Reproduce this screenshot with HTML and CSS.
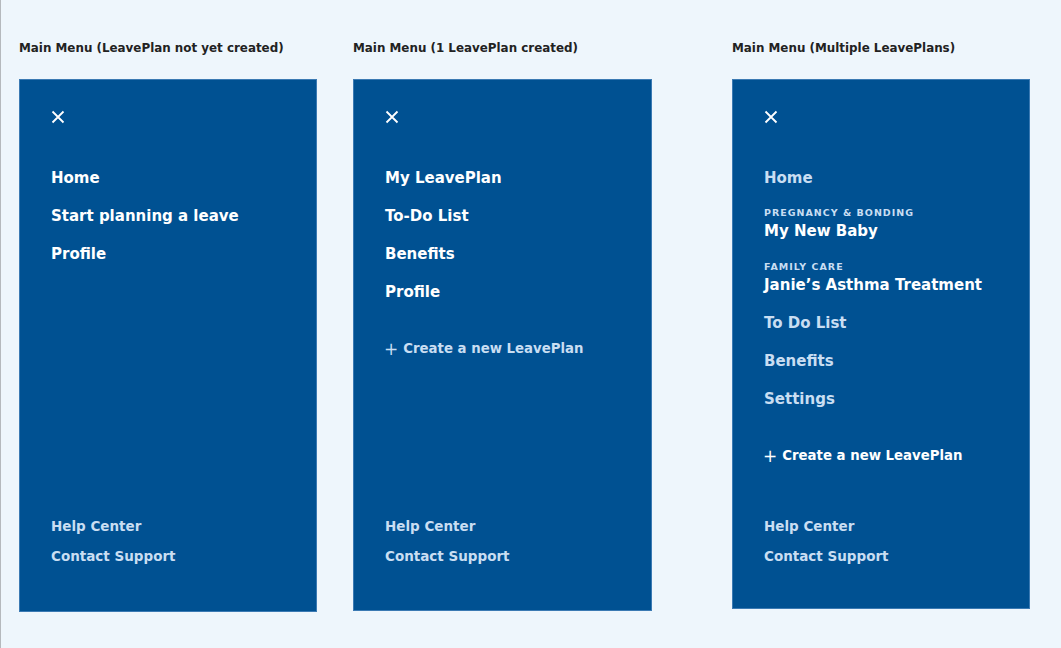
FILE: index.html
```html
<!DOCTYPE html>
<html lang="en">
<head>
<meta charset="utf-8">
<title>Main Menu</title>
<link rel="stylesheet" href="styles.css">
</head>
<body>
<div class="board">
  <section class="col col-1">
    <h2 class="col-title">Main Menu (LeavePlan not yet created)</h2>
    <nav class="panel panel-1">
      <svg class="close" viewBox="0 0 14 14" width="14" height="14"><path d="M1.5 1.5 L12.5 12.5 M12.5 1.5 L1.5 12.5" stroke="#fff" stroke-width="1.8" fill="none"/></svg>
      <ul class="items">
        <li class="item">Home</li>
        <li class="item">Start planning a leave</li>
        <li class="item">Profile</li>
      </ul>
      <ul class="footer">
        <li class="link">Help Center</li>
        <li class="link">Contact Support</li>
      </ul>
    </nav>
  </section>
  <section class="col col-2">
    <h2 class="col-title">Main Menu (1 LeavePlan created)</h2>
    <nav class="panel panel-2">
      <svg class="close" viewBox="0 0 14 14" width="14" height="14"><path d="M1.5 1.5 L12.5 12.5 M12.5 1.5 L1.5 12.5" stroke="#fff" stroke-width="1.8" fill="none"/></svg>
      <ul class="items">
        <li class="item">My LeavePlan</li>
        <li class="item">To-Do List</li>
        <li class="item">Benefits</li>
        <li class="item">Profile</li>
      </ul>
      <div class="create create-muted"><span class="plus">+</span>Create a new LeavePlan</div>
      <ul class="footer">
        <li class="link">Help Center</li>
        <li class="link">Contact Support</li>
      </ul>
    </nav>
  </section>
  <section class="col col-3">
    <h2 class="col-title">Main Menu (Multiple LeavePlans)</h2>
    <nav class="panel panel-3">
      <svg class="close" viewBox="0 0 14 14" width="14" height="14"><path d="M1.5 1.5 L12.5 12.5 M12.5 1.5 L1.5 12.5" stroke="#fff" stroke-width="1.8" fill="none"/></svg>
      <ul class="items">
        <li class="item muted">Home</li>
        <li class="plan"><span class="plan-cat">Pregnancy &amp; Bonding</span><span class="plan-name">My New Baby</span></li>
        <li class="plan"><span class="plan-cat">Family Care</span><span class="plan-name">Janie’s Asthma Treatment</span></li>
        <li class="item muted">To Do List</li>
        <li class="item muted">Benefits</li>
        <li class="item muted">Settings</li>
      </ul>
      <div class="create"><span class="plus">+</span>Create a new LeavePlan</div>
      <ul class="footer">
        <li class="link">Help Center</li>
        <li class="link">Contact Support</li>
      </ul>
    </nav>
  </section>
</div>
</body>
</html>
```
FILE: styles.css
```css
* { box-sizing: border-box; }
html, body { margin: 0; padding: 0; }
body {
  background: #eef6fc;
  font-family: "DejaVu Sans", "Noto Sans", sans-serif;
  width: 1061px;
  height: 648px;
  overflow: hidden;
}
.board {
  display: flex;
  align-items: flex-start;
  height: 648px;
  padding-left: 18px;
  border-left: 1px solid #b5b9bd;
}
.col { width: 298px; flex: none; }
.col-2 { margin-left: 36px; width: 299px; }
.col-3 { margin-left: 80px; }
.col-title {
  margin: 0;
  padding-top: 40px;
  height: 79px;
  font-size: 11.9px;
  font-weight: 700;
  color: #222;
  line-height: 16px;
}
.panel {
  background: #005192;
  border: 1px solid #3b7ab3;
  display: flex;
  flex-direction: column;
  padding: 30px 0 45px 31px;
}
.panel-1 { height: 533px; }
.panel-2 { height: 532px; padding-bottom: 44px; }
.panel-3 { height: 530px; padding-bottom: 42px; }
.close { display: block; margin-bottom: 44px; }
ul { list-style: none; margin: 0; padding: 0; }
.items { display: flex; flex-direction: column; }
.item {
  font-size: 15px;
  font-weight: 700;
  color: #fff;
  line-height: 20px;
  margin-bottom: 18px;
}
.item.muted { color: #c9def2; }
.plan { display: flex; flex-direction: column; padding-top: 1px; margin-bottom: 18.5px; }
.plan-cat {
  font-size: 9.5px;
  font-weight: 700;
  text-transform: uppercase;
  letter-spacing: 1px;
  color: #c9def2;
  line-height: 12px;
}
.plan-name {
  font-size: 15px;
  font-weight: 700;
  color: #fff;
  line-height: 20px;
  margin-top: 2px;
}
.create {
  margin-top: 19px;
  font-size: 13.3px;
  font-weight: 700;
  color: #fff;
  line-height: 20px;
  display: flex;
  align-items: center;
}
.create-muted { color: #c9def2; }
.plus { font-weight: 400; font-size: 17px; margin-right: 5px; margin-left: -1px; }
.footer { margin-top: auto; }
.link {
  font-size: 13.5px;
  font-weight: 700;
  color: #c9def2;
  line-height: 20px;
  margin-top: 10px;
}
```
